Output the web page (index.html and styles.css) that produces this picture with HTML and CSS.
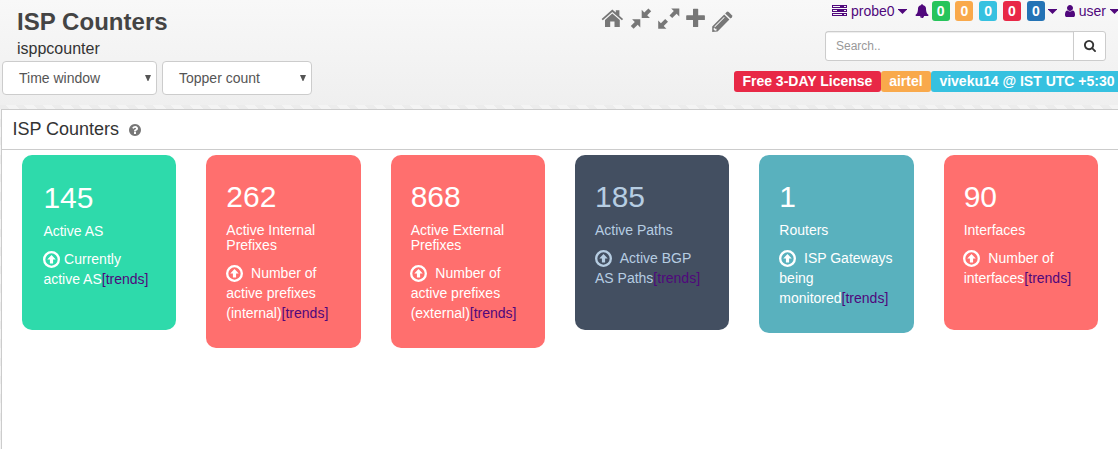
FILE: index.html
```html
<!DOCTYPE html>
<html lang="en">
<head>
<meta charset="utf-8">
<title>ISP Counters</title>
<link rel="stylesheet" href="styles.css">
</head>
<body>
<svg class="defs" width="0" height="0">
  <symbol id="up" viewBox="0 0 16 16"><circle cx="8" cy="8" r="6.9" fill="none" stroke="currentColor" stroke-width="2.2"/><path fill="currentColor" d="M8 3.8L12 8H9.5V11.7H6.5V8H4z"/></symbol>
  <symbol id="caret" viewBox="0 0 9 5"><path fill="currentColor" d="M0 0h9v.5L4.5 5 0 .5z"/></symbol>
  <symbol id="down" viewBox="0 0 6 6"><path fill="currentColor" d="M0 0h6L3.4 6h-.8z"/></symbol>
</svg>
<header class="top">
  <div class="heading">
    <h1 class="title">ISP Counters</h1>
    <p class="subtitle">isppcounter</p>
    <div class="filters">
      <div class="select window">Time window<svg width="6" height="6"><use href="#down"/></svg></div>
      <div class="select count">Topper count<svg width="6" height="6"><use href="#down"/></svg></div>
    </div>
  </div>
  <nav class="tools">
    <svg width="132" height="26" viewBox="601 7 132 26" fill="#777">
      <path d="M612.3 13.6L619.8 20V27H614.5V21.5H610.2V27H605V20z"/>
      <path d="M612.3 9.6L615.8 12.6V10.2H619.4V15.7L623.1 18.9 621.9 20.2 612.3 12.1 602.8 20.2 601.6 18.9z"/>
      <path d="M641.7 9.8L644.3 12.4 648.4 8.4 651.2 11.2 647.2 15.2 649.9 18H641.7z"/>
      <path d="M640.3 19.3V27.4L637.7 24.8 633.6 28.8 630.8 26 634.8 22 632.1 19.3z"/>
      <path d="M671.2 8.4H679.3V16.5L676.6 13.8 672.2 18.1 669.5 15.4 673.8 11.1z"/>
      <path d="M658.2 20.5L660.9 23.2 665.2 18.9 668 21.7 663.7 26 666.4 28.7H658.2z"/>
      <path d="M693 9.3Q693 8.7 693.6 8.7H697.6Q698.2 8.7 698.2 9.3V15.3H704.2Q704.9 15.3 704.9 16V19.5Q704.9 20.1 704.2 20.1H698.2V26.4Q698.2 27 697.6 27H693.6Q693 27 693 26.4V20.1H686.9Q686.2 20.1 686.2 19.5V16Q686.2 15.3 686.9 15.3H693z"/>
      <path fill-rule="evenodd" d="M724.2 14.4L729.4 19.6 717.6 31.4 712.2 32V26.4zM724 17L714.4 26.6 715 27.2 724.7 17.6zM713.7 28.2L713.6 29.6 715 30.7 716.5 30.4V28.7H714.8V27.4z"/>
      <path d="M725.2 13.4L726.6 12Q727.6 11 728.7 12L731.9 15.2Q732.8 16.2 731.9 17.2L730.4 18.6z"/>
    </svg>
  </nav>
  <div class="account">
    <div class="menu">
      <svg width="15" height="12" viewBox="0 0 15 12" fill="#50087c"><path d="M0 0H15V3H0zM0 4H15V7H0zM0 8H15V11H0z"/><path fill="#f5f5f5" d="M1 1H8V2H1zM1 5H5V6H1zM1 9H10V10H1zM12 1h2v1h-2zM12 5h2v1h-2zM12 9h2v1h-2z"/></svg>
      <span class="probe">probe0</span>
      <svg class="caret" width="9" height="5"><use href="#caret"/></svg>
      <svg class="bell" width="14" height="14" viewBox="0 0 1792 1792" fill="currentColor"><path d="M912 1696q0-16-16-16-59 0-101.5-42.5t-42.5-101.5q0-16-16-16t-16 16q0 73 51.5 124.5t124.5 51.5q16 0 16-16zm816-288q0 52-38 90t-90 38h-448q0 106-75 181t-181 75-181-75-75-181h-448q-52 0-90-38t-38-90q50-42 91-88t85-119.5 74.5-158.5 50-206 19.5-260q0-152 117-282.5t307-158.5q-8-19-8-39 0-40 28-68t68-28 68 28 28 68q0 20-8 39 190 28 307 158.5t117 282.5q0 139 19.5 260t50 206 74.5 158.5 85 119.5 91 88z"/></svg>
      <span class="badges"><b class="badge green">0</b><b class="badge orange">0</b><b class="badge cyan">0</b><b class="badge red">0</b><b class="badge blue">0</b></span>
      <svg class="caret alerts" width="9" height="5"><use href="#caret"/></svg>
      <svg class="person" width="10" height="12" viewBox="256 128 1280 1536" preserveAspectRatio="none" fill="currentColor"><path d="M1536 1399q0 109-62.5 187t-150.5 78h-854q-88 0-150.5-78t-62.5-187q0-85 8.5-160.5t31.5-152 58.5-131 94-89 134.5-34.5q131 128 313 128t313-128q76 0 134.5 34.5t94 89 58.5 131 31.5 152 8.5 160.5zm-256-887q0 159-112.5 271.5t-271.5 112.5-271.5-112.5-112.5-271.5 112.5-271.5 271.5-112.5 271.5 112.5 112.5 271.5z"/></svg>
      <span class="user">user</span>
      <svg class="caret" width="9" height="5"><use href="#caret"/></svg>
    </div>
    <div class="search">
      <span class="field">Search..</span>
      <span class="go"><svg width="12" height="12" viewBox="64 128 1664 1664" fill="#333"><path d="M1216 832q0-185-131.5-316.5t-316.5-131.5-316.5 131.5-131.5 316.5 131.5 316.5 316.5 131.5 316.5-131.5 131.5-316.5zm512 832q0 52-38 90t-90 38q-54 0-90-38l-343-342q-179 124-399 124-143 0-273.5-55.5t-225-150-150-225-55.5-273.5 55.5-273.5 150-225 225-150 273.5-55.5 273.5 55.5 225 150 150 225 55.5 273.5q0 220-124 399l343 343q37 37 37 90z"/></svg></span>
    </div>
    <div class="labels"><b class="label red">Free 3-DAY License</b><b class="label orange">airtel</b><b class="label cyan last">viveku14 @ IST UTC +5:30</b></div>
  </div>
</header>
<main class="page">
  <section class="panel">
    <div class="panel-head">ISP Counters
      <svg width="12" height="12" viewBox="128 128 1536 1536" fill="#777"><path d="M1024 1376v-192q0-14-9-23t-23-9h-192q-14 0-23 9t-9 23v192q0 14 9 23t23 9h192q14 0 23-9t9-23zm256-672q0-88-55.5-163t-138.5-116-170-41q-243 0-371 213-15 24 8 42l132 100q7 6 19 6 16 0 25-12 53-68 86-92 34-24 86-24 48 0 85.5 26t37.5 59q0 38-20 61t-68 45q-63 28-115.5 86.5t-52.5 125.5v36q0 14 9 23t23 9h192q14 0 23-9t9-23q0-19 21.5-49.5t54.5-49.5q32-18 49-28.5t46-35 44.5-48 28-60.5 12.5-81zm384 192q0 209-103 385.5t-279.5 279.5-385.5 103-385.5-103-279.5-279.5-103-385.5 103-385.5 279.5-279.5 385.5-103 385.5 103 279.5 279.5 103 385.5z"/></svg>
    </div>
    <div class="cards">
      <article class="card mint"><div class="num">145</div><div class="name">Active AS</div><p class="note"><svg width="17" height="17"><use href="#up"/></svg>Currently<br>active AS<a>[trends]</a></p></article>
      <article class="card coral"><div class="num">262</div><div class="name">Active Internal<br>Prefixes</div><p class="note"><svg width="17" height="17"><use href="#up"/></svg>Number of<br>active prefixes<br>(internal)<a>[trends]</a></p></article>
      <article class="card coral"><div class="num">868</div><div class="name">Active External<br>Prefixes</div><p class="note"><svg width="17" height="17"><use href="#up"/></svg>Number of<br>active prefixes<br>(external)<a>[trends]</a></p></article>
      <article class="card slate"><div class="num">185</div><div class="name">Active Paths</div><p class="note"><svg width="17" height="17"><use href="#up"/></svg>Active BGP<br>AS Paths<a>[trends]</a></p></article>
      <article class="card teal"><div class="num">1</div><div class="name">Routers</div><p class="note"><svg width="17" height="17"><use href="#up"/></svg>ISP Gateways<br>being<br>monitored<a>[trends]</a></p></article>
      <article class="card coral"><div class="num">90</div><div class="name">Interfaces</div><p class="note"><svg width="17" height="17"><use href="#up"/></svg>Number of<br>interfaces<a>[trends]</a></p></article>
    </div>
  </section>
</main>
</body>
</html>
```
FILE: styles.css
```css
* { box-sizing: border-box; }
body {
  margin: 0;
  height: 449px;
  overflow: hidden;
  display: flex;
  flex-direction: column;
  font: 14px/20px "Liberation Sans", Arial, sans-serif;
  color: #333;
}
svg { flex: none; }
.defs { display: none; }

.top {
  height: 105px;
  flex: none;
  display: flex;
  background: linear-gradient(#f8f8f8, #efefef);
}
.heading { width: 601px; flex: none; }
.title {
  margin: 0;
  padding: 8px 0 0 17px;
  font-size: 24px;
  line-height: 28px;
  letter-spacing: .04px;
  color: #444;
}
.subtitle {
  margin: 0;
  padding: 2px 0 0 17px;
  height: 25px;
  font-size: 16px;
  line-height: 22px;
}
.filters { display: flex; gap: 5px; padding-left: 2px; }
.select {
  height: 34px;
  display: flex;
  align-items: center;
  justify-content: space-between;
  padding: 0 5px 0 16px;
  border: 1px solid #ccc;
  border-radius: 4px;
  background: #fff;
  color: #555;
}
.window { width: 155px; }
.count { width: 150px; }

.tools { width: 133px; flex: none; padding-top: 7px; }
.tools svg { display: block; }

.account { width: 384px; flex: none; overflow: hidden; }
.menu {
  height: 31px;
  padding: 1px 0 10px 98px;
  display: flex;
  align-items: center;
  color: #50087c;
}
.probe { width: 44px; margin: 0 3px 0 4px; }
.bell { margin: 0 3px 0 8px; }
.badges { display: flex; gap: 5.8px; }
.badge {
  width: 18px;
  height: 20px;
  border-radius: 3px;
  text-align: center;
  color: #fff;
}
.alerts { margin: 0 8px 0 3px; }
.person { margin-right: 4px; }
.user { margin-right: 4px; }
.green { background: #26c45b; }
.orange { background: #f9a94b; }
.cyan { background: #36c1e0; }
.red { background: #e82846; }
.blue { background: #2473b5; }

.search {
  width: 281px;
  height: 30px;
  margin-left: 91px;
  display: flex;
  border: 1px solid #ccc;
  border-radius: 3px;
  background: #fff;
}
.field {
  flex: 1;
  padding-left: 10px;
  font-size: 12px;
  line-height: 28px;
  color: #999;
  box-shadow: inset 0 1px 1px rgba(0, 0, 0, .075);
}
.go {
  width: 32px;
  display: flex;
  align-items: center;
  justify-content: center;
  border-left: 1px solid #ccc;
}
.labels { display: flex; padding-top: 10px; }
.label {
  height: 21px;
  flex: none;
  padding: 0 8.4px;
  border-radius: 3px;
  color: #fff;
  white-space: nowrap;
}

.page {
  flex: 1;
  padding: 4px 0 0 1px;
  background: repeating-linear-gradient(45deg, #f4f4f4 0 7px, #ececec 7px 13px);
}
.panel {
  height: 100%;
  border: 1px solid #ccc;
  border-width: 1px 0 0 1px;
  background: #fff;
}
.panel-head {
  height: 40px;
  display: flex;
  align-items: center;
  gap: 10px;
  padding: 0 0 2px 10.4px;
  border-bottom: 1px solid #ccc;
  font-size: 18px;
}
.panel-head svg { margin-top: 3px; }
.cards {
  display: grid;
  grid-template-columns: repeat(6, 1fr);
  align-items: start;
  gap: 30px;
  padding: 5px 20px 0;
}
.card {
  min-height: 175px;
  padding: 25px 0 25px 20px;
  border-radius: 10px;
  color: #fff;
}
.mint { padding: 26px 0 20px 21.4px; background: #2edaab; }
.coral { background: #ff6f6e; }
.slate { background: #434f61; color: #b6cde2; }
.teal { background: #59b1be; }
.num { font-size: 30px; line-height: 33px; }
.name { margin-top: 10px; line-height: 15px; }
.note { margin: 10px 0 0; }
.note svg { height: 17px; margin: -2px 8px -2px -.3px; vertical-align: -2px; }
.mint .note svg { margin-right: 4px; }
.note a { color: #50087c; }
```
